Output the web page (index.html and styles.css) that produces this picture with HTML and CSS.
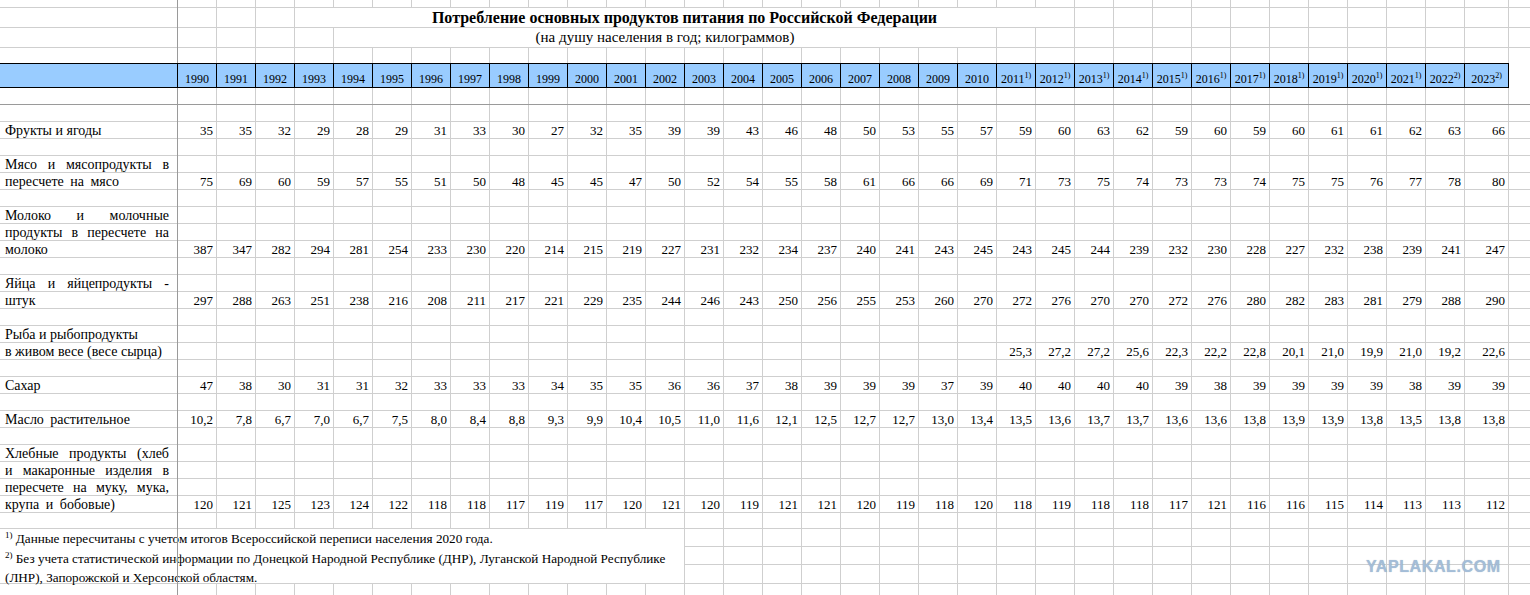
FILE: index.html
```html
<!DOCTYPE html>
<html lang="ru">
<head>
<meta charset="utf-8">
<title>Потребление основных продуктов питания</title>
<link rel="stylesheet" href="styles.css">
</head>
<body>
<div class="sheet">
  <div class="pane-v"></div>
  <div class="wm">YAPLAKAL.COM</div>

  <div class="row r0"></div>
  <div class="row r-title"><div class="title">Потребление основных продуктов питания по Российской Федерации</div></div>
  <div class="row r-sub"><div class="subtitle">(на душу населения в год; килограммов)</div></div>
  <div class="row r-pre"></div>

  <div class="band">
    <span></span><span>1990</span><span>1991</span><span>1992</span><span>1993</span><span>1994</span><span>1995</span><span>1996</span><span>1997</span><span>1998</span><span>1999</span><span>2000</span><span>2001</span><span>2002</span><span>2003</span><span>2004</span><span>2005</span><span>2006</span><span>2007</span><span>2008</span><span>2009</span><span>2010</span><span>2011<sup>1)</sup></span><span>2012<sup>1)</sup></span><span>2013<sup>1)</sup></span><span>2014<sup>1)</sup></span><span>2015<sup>1)</sup></span><span>2016<sup>1)</sup></span><span>2017<sup>1)</sup></span><span>2018<sup>1)</sup></span><span>2019<sup>1)</sup></span><span>2020<sup>1)</sup></span><span>2021<sup>1)</sup></span><span>2022<sup>2)</sup></span><span>2023<sup>2)</sup></span>
  </div>

  <div class="row r-pane"></div>
  <div class="row"></div>

  <div class="row"><div class="lbl">Фрукты и ягоды</div><span>35</span><span>35</span><span>32</span><span>29</span><span>28</span><span>29</span><span>31</span><span>33</span><span>30</span><span>27</span><span>32</span><span>35</span><span>39</span><span>39</span><span>43</span><span>46</span><span>48</span><span>50</span><span>53</span><span>55</span><span>57</span><span>59</span><span>60</span><span>63</span><span>62</span><span>59</span><span>60</span><span>59</span><span>60</span><span>61</span><span>61</span><span>62</span><span>63</span><span>66</span></div>
  <div class="row"></div>

  <div class="row"><div class="lbl j">Мясо и мясопродукты в</div></div>
  <div class="row"><div class="lbl ws">пересчете на мясо</div><span>75</span><span>69</span><span>60</span><span>59</span><span>57</span><span>55</span><span>51</span><span>50</span><span>48</span><span>45</span><span>45</span><span>47</span><span>50</span><span>52</span><span>54</span><span>55</span><span>58</span><span>61</span><span>66</span><span>66</span><span>69</span><span>71</span><span>73</span><span>75</span><span>74</span><span>73</span><span>73</span><span>74</span><span>75</span><span>75</span><span>76</span><span>77</span><span>78</span><span>80</span></div>
  <div class="row"></div>

  <div class="row"><div class="lbl j">Молоко и молочные</div></div>
  <div class="row"><div class="lbl j">продукты в пересчете на</div></div>
  <div class="row"><div class="lbl">молоко</div><span>387</span><span>347</span><span>282</span><span>294</span><span>281</span><span>254</span><span>233</span><span>230</span><span>220</span><span>214</span><span>215</span><span>219</span><span>227</span><span>231</span><span>232</span><span>234</span><span>237</span><span>240</span><span>241</span><span>243</span><span>245</span><span>243</span><span>245</span><span>244</span><span>239</span><span>232</span><span>230</span><span>228</span><span>227</span><span>232</span><span>238</span><span>239</span><span>241</span><span>247</span></div>
  <div class="row"></div>

  <div class="row"><div class="lbl j">Яйца и яйцепродукты -</div></div>
  <div class="row"><div class="lbl">штук</div><span>297</span><span>288</span><span>263</span><span>251</span><span>238</span><span>216</span><span>208</span><span>211</span><span>217</span><span>221</span><span>229</span><span>235</span><span>244</span><span>246</span><span>243</span><span>250</span><span>256</span><span>255</span><span>253</span><span>260</span><span>270</span><span>272</span><span>276</span><span>270</span><span>270</span><span>272</span><span>276</span><span>280</span><span>282</span><span>283</span><span>281</span><span>279</span><span>288</span><span>290</span></div>
  <div class="row"></div>

  <div class="row"><div class="lbl">Рыба и рыбопродукты</div></div>
  <div class="row"><div class="lbl">в живом весе (весе сырца)</div><span class="from2011">25,3</span><span>27,2</span><span>27,2</span><span>25,6</span><span>22,3</span><span>22,2</span><span>22,8</span><span>20,1</span><span>21,0</span><span>19,9</span><span>21,0</span><span>19,2</span><span>22,6</span></div>
  <div class="row"></div>

  <div class="row"><div class="lbl">Сахар</div><span>47</span><span>38</span><span>30</span><span>31</span><span>31</span><span>32</span><span>33</span><span>33</span><span>33</span><span>34</span><span>35</span><span>35</span><span>36</span><span>36</span><span>37</span><span>38</span><span>39</span><span>39</span><span>39</span><span>37</span><span>39</span><span>40</span><span>40</span><span>40</span><span>40</span><span>39</span><span>38</span><span>39</span><span>39</span><span>39</span><span>39</span><span>38</span><span>39</span><span>39</span></div>
  <div class="row"></div>

  <div class="row"><div class="lbl ws">Масло растительное</div><span>10,2</span><span>7,8</span><span>6,7</span><span>7,0</span><span>6,7</span><span>7,5</span><span>8,0</span><span>8,4</span><span>8,8</span><span>9,3</span><span>9,9</span><span>10,4</span><span>10,5</span><span>11,0</span><span>11,6</span><span>12,1</span><span>12,5</span><span>12,7</span><span>12,7</span><span>13,0</span><span>13,4</span><span>13,5</span><span>13,6</span><span>13,7</span><span>13,7</span><span>13,6</span><span>13,6</span><span>13,8</span><span>13,9</span><span>13,9</span><span>13,8</span><span>13,5</span><span>13,8</span><span>13,8</span></div>
  <div class="row"></div>

  <div class="row"><div class="lbl j">Хлебные продукты (хлеб</div></div>
  <div class="row"><div class="lbl j">и макаронные изделия в</div></div>
  <div class="row"><div class="lbl j">пересчете на муку, мука,</div></div>
  <div class="row"><div class="lbl ws">крупа и бобовые)</div><span>120</span><span>121</span><span>125</span><span>123</span><span>124</span><span>122</span><span>118</span><span>118</span><span>117</span><span>119</span><span>117</span><span>120</span><span>121</span><span>120</span><span>119</span><span>121</span><span>121</span><span>120</span><span>119</span><span>118</span><span>120</span><span>118</span><span>119</span><span>118</span><span>118</span><span>117</span><span>121</span><span>116</span><span>116</span><span>115</span><span>114</span><span>113</span><span>113</span><span>112</span></div>
  <div class="row r-gap"></div>

  <div class="fn-row">
    <div class="note"><sup>1)</sup> Данные пересчитаны с учетом итогов Всероссийской переписи населения 2020 года.<br><sup>2)</sup> Без учета статистической информации по Донецкой Народной Республике (ДНР), Луганской Народной Республике<br>(ЛНР), Запорожской и Херсонской областям.</div>
    <div class="fn-fill"></div>
  </div>
  <div class="row"></div>
</div>
</body>
</html>
```

FILE: styles.css
```css
* {
  box-sizing: border-box;
}

html,
body {
  margin: 0;
  padding: 0;
  background: #fff;
  overflow: hidden;
}

body {
  font-family: "Liberation Serif", "Times New Roman", "DejaVu Serif", serif;
  font-size: 13px;
  color: #000;
}

.sheet {
  position: relative;
  width: 1530px;
  height: 595px;
  overflow: hidden;
  background-image:
    linear-gradient(to right, #cfcfcf 1px, transparent 1px),
    repeating-linear-gradient(to right, transparent 0 38px, #cfcfcf 38px 39px);
  background-size: 1px 100%, 1287px 100%;
  background-position: 1508px 0, 178px 0;
  background-repeat: no-repeat;
}

.pane-v {
  position: absolute;
  left: 177px;
  top: 0;
  width: 1px;
  height: 595px;
  background: #9a9a9a;
  z-index: 1;
}

.wm {
  position: absolute;
  left: 1366px;
  top: 558px;
  z-index: 3;
  font-family: "Liberation Sans", Arial, sans-serif;
  font-weight: bold;
  font-size: 16px;
  line-height: 18px;
  letter-spacing: 0.6px;
  color: #a3bdd8;
  text-shadow: 0 0 1px rgba(70, 95, 125, 0.4);
}

.row {
  display: grid;
  grid-template-columns: 178px repeat(33, 39px) 44px;
  height: 17px;
  border-bottom: 1px solid #cfcfcf;
  line-height: 18px;
}

.row > span {
  text-align: right;
  padding-right: 4px;
  white-space: nowrap;
}

.r0 {
  height: 8px;
}

.r-title,
.r-sub {
  height: 20px;
  line-height: 19px;
}

.r-pre {
  height: 15px;
  border-bottom: 0;
}

.r-pane {
  border-bottom-color: #9a9a9a;
}

.r-gap {
  height: 16px;
}

.title {
  grid-column: 5 / 25;
  background: #fff;
  border-right: 1px solid #cfcfcf;
  text-align: center;
  font-weight: bold;
  font-size: 16px;
  white-space: nowrap;
}

.subtitle {
  grid-column: 6 / 23;
  background: #fff;
  border-right: 1px solid #cfcfcf;
  text-align: center;
  font-size: 15px;
  white-space: nowrap;
}

.band {
  position: relative;
  z-index: 2;
  display: grid;
  grid-template-columns: 178px repeat(33, 39px) 44px;
  width: 1509px;
  height: 25px;
  background: #99ccff;
  border-top: 1px solid #000;
  border-bottom: 1px solid #000;
}

.band span {
  border-right: 1px solid #000;
  font-size: 12px;
  line-height: 16px;
  padding-top: 7px;
  text-align: center;
  white-space: nowrap;
}

.band sup {
  font-size: 8px;
  line-height: 0;
  vertical-align: 5px;
}

.lbl {
  padding: 0 9px 0 5px;
  font-size: 14px;
  white-space: nowrap;
}

.lbl.j {
  white-space: normal;
  text-align: justify;
  text-align-last: justify;
}

.lbl.ws {
  word-spacing: 3px;
}

.from2011 {
  grid-column: 23;
}

.fn-row {
  display: flex;
  height: 55px;
  border-bottom: 1px solid #cfcfcf;
}

.note {
  width: 685px;
  flex: none;
  background: #fff;
  border-right: 1px solid #cfcfcf;
  padding-left: 5px;
  font-size: 13.2px;
  line-height: 19.5px;
  white-space: nowrap;
}

.note sup {
  font-size: 9px;
  line-height: 0;
  vertical-align: 5px;
}

.fn-fill {
  flex: 1;
  background-image: linear-gradient(to bottom, transparent 17px, #cfcfcf 17px 18px, transparent 18px 35px, #cfcfcf 35px 36px, transparent 36px);
}
```
